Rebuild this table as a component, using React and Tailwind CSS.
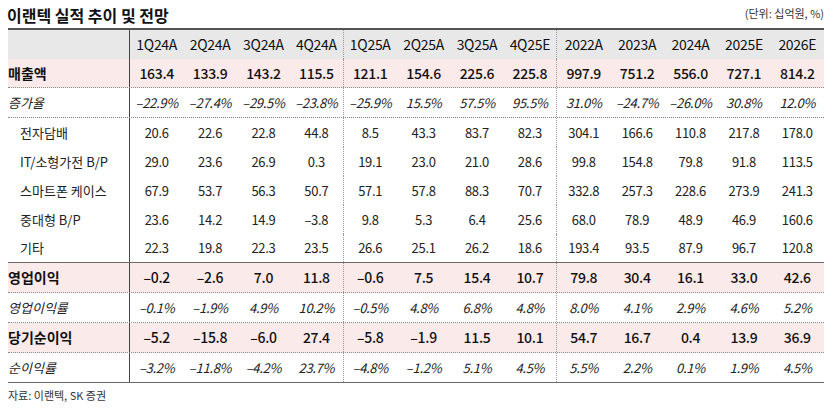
import React from "react";

const cols = ["1Q24A", "2Q24A", "3Q24A", "4Q24A", "1Q25A", "2Q25A", "3Q25A", "4Q25E", "2022A", "2023A", "2024A", "2025E", "2026E"];

const rows = [
  { label: "매출액", kind: "main", h: "h-[29px]", line: "dot", values: ["163.4", "133.9", "143.2", "115.5", "121.1", "154.6", "225.6", "225.8", "997.9", "751.2", "556.0", "727.1", "814.2"] },
  { label: "증가율", kind: "pct", h: "h-[30px]", line: "dot", values: ["–22.9%", "–27.4%", "–29.5%", "–23.8%", "–25.9%", "15.5%", "57.5%", "95.5%", "31.0%", "–24.7%", "–26.0%", "30.8%", "12.0%"] },
  { label: "전자담배", kind: "sub", h: "h-[29px]", line: "none", values: ["20.6", "22.6", "22.8", "44.8", "8.5", "43.3", "83.7", "82.3", "304.1", "166.6", "110.8", "217.8", "178.0"] },
  { label: "IT/소형가전 B/P", kind: "sub", h: "h-[29px]", line: "none", values: ["29.0", "23.6", "26.9", "0.3", "19.1", "23.0", "21.0", "28.6", "99.8", "154.8", "79.8", "91.8", "113.5"] },
  { label: "스마트폰 케이스", kind: "sub", h: "h-[29px]", line: "none", values: ["67.9", "53.7", "56.3", "50.7", "57.1", "57.8", "88.3", "70.7", "332.8", "257.3", "228.6", "273.9", "241.3"] },
  { label: "중대형 B/P", kind: "sub", h: "h-[29px]", line: "none", values: ["23.6", "14.2", "14.9", "–3.8", "9.8", "5.3", "6.4", "25.6", "68.0", "78.9", "48.9", "46.9", "160.6"] },
  { label: "기타", kind: "sub", h: "h-[29px]", line: "solid", values: ["22.3", "19.8", "22.3", "23.5", "26.6", "25.1", "26.2", "18.6", "193.4", "93.5", "87.9", "96.7", "120.8"] },
  { label: "영업이익", kind: "main", h: "h-[30px]", line: "dot", values: ["–0.2", "–2.6", "7.0", "11.8", "–0.6", "7.5", "15.4", "10.7", "79.8", "30.4", "16.1", "33.0", "42.6"] },
  { label: "영업이익률", kind: "pct", h: "h-[30px]", line: "dot", values: ["–0.1%", "–1.9%", "4.9%", "10.2%", "–0.5%", "4.8%", "6.8%", "4.8%", "8.0%", "4.1%", "2.9%", "4.6%", "5.2%"] },
  { label: "당기순이익", kind: "main", h: "h-[30px]", line: "dot", values: ["–5.2", "–15.8", "–6.0", "27.4", "–5.8", "–1.9", "11.5", "10.1", "54.7", "16.7", "0.4", "13.9", "36.9"] },
  { label: "순이익률", kind: "pct", h: "h-[30px]", line: "solid", values: ["–3.2%", "–11.8%", "–4.2%", "23.7%", "–4.8%", "–1.2%", "5.1%", "4.5%", "5.5%", "2.2%", "0.1%", "1.9%", "4.5%"] },
];

const cellSep = (i) =>
  i === 3 || i === 7 ? "border-r border-dotted border-[#9a9a9a]" : "";

const Row = ({ row }) => {
  const bg = row.kind === "main" ? "bg-[#fbeaea]" : "bg-white";
  const line =
    row.line === "dot"
      ? "border-b border-dotted border-[#8a8a8a]"
      : row.line === "solid"
      ? "border-b border-[#6a6a6a]"
      : "";
  const labelCls =
    row.kind === "main"
      ? "pl-0 font-bold text-[14px] text-[#111]"
      : row.kind === "pct"
      ? "pl-0 italic text-[13px] text-[#222]"
      : "pl-[12px] text-[13px] text-[#222]";
  const valCls =
    row.kind === "main"
      ? "font-medium text-[14px] text-[#111]"
      : row.kind === "pct"
      ? "italic text-[13px] text-[#222]"
      : "text-[13px] text-[#222]";
  return (
    <div className={`grid grid-cols-[122px_repeat(13,1fr)] ${row.h} ${bg} ${line}`}>
      <div className={`flex items-center border-r border-[#444] ${labelCls}`}>{row.label}</div>
      {row.values.map((v, i) => (
        <div key={i} className={`flex items-center justify-center tracking-[-0.3px] ${valCls} ${cellSep(i)}`}>
          {v}
        </div>
      ))}
    </div>
  );
};

export default function App() {
  return (
    <div
      className="w-[830px] h-[408px] bg-white px-[8px] pr-[6px]"
      style={{ fontFamily: "'Noto Sans CJK KR', 'Noto Sans', sans-serif" }}
    >
      <div className="flex items-end justify-between h-[28px] pb-[3px] -ml-[1px]">
        <div className="text-[16px] font-bold text-[#111] leading-none pb-[2px]">이랜텍 실적 추이 및 전망</div>
        <div className="text-[11px] text-[#333] leading-none pb-[6px]">(단위: 십억원, %)</div>
      </div>
      <div className="border-t-2 border-[#555]">
        <div className="grid grid-cols-[122px_repeat(13,1fr)] h-[29px] bg-[#e8e8e8]">
          <div className="border-r border-[#444]" />
          {cols.map((c, i) => (
            <div key={c} className={`flex items-center justify-center text-[14px] text-[#111] tracking-[-0.3px] ${cellSep(i)}`}>
              {c}
            </div>
          ))}
        </div>
        {rows.map((r) => (
          <Row key={r.label} row={r} />
        ))}
      </div>
      <div className="mt-[4px] text-[11px] text-[#333]">자료: 이랜텍, SK 증권</div>
    </div>
  );
}
